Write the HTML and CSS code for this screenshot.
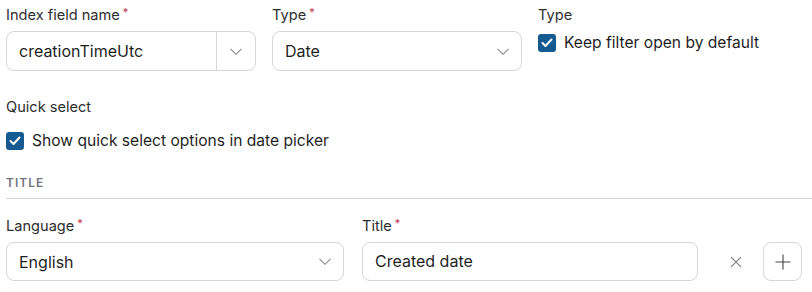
FILE: index.html
```html
<!DOCTYPE html>
<html lang="en">
<head>
    <meta charset="UTF-8">
    <meta name="viewport" content="width=device-width, initial-scale=1.0">
    <title>Date Filter</title>
    <link rel="stylesheet" href="styles.css">
</head>
<body>
    <div class="container">
        <div class="row-top">
            <div class="field">
                <label class="label">Index field name<span class="req">*</span></label>
                <div class="combo">
                    <div class="combo-value">creationTimeUtc</div>
                    <div class="combo-toggle">
                        <svg width="12" height="7" viewBox="0 0 12 7"><path d="M0.5 0.8l5.5 5.5 5.5-5.5" fill="none" stroke="#8a8a8a" stroke-width="1.1"/></svg>
                    </div>
                </div>
            </div>
            <div class="field">
                <label class="label">Type<span class="req">*</span></label>
                <div class="select">
                    <span>Date</span>
                    <svg width="12" height="7" viewBox="0 0 12 7"><path d="M0.5 0.8l5.5 5.5 5.5-5.5" fill="none" stroke="#8a8a8a" stroke-width="1.1"/></svg>
                </div>
            </div>
            <div class="field">
                <label class="label">Type</label>
                <div class="check check-top">
                    <span class="box"><svg width="12" height="10" viewBox="0 0 12 10"><path d="M1.5 5l3 3 6-6.5" fill="none" stroke="#fff" stroke-width="2" stroke-linecap="round" stroke-linejoin="round"/></svg></span>
                    Keep filter open by default
                </div>
            </div>
        </div>

        <div class="quick">
            <div class="label">Quick select</div>
            <div class="check check-quick">
                <span class="box"><svg width="12" height="10" viewBox="0 0 12 10"><path d="M1.5 5l3 3 6-6.5" fill="none" stroke="#fff" stroke-width="2" stroke-linecap="round" stroke-linejoin="round"/></svg></span>
                Show quick select options in date picker
            </div>
        </div>

        <div class="section-title">TITLE</div>

        <div class="row-bottom">
            <div class="field">
                <label class="label">Language<span class="req">*</span></label>
                <div class="select">
                    <span>English</span>
                    <svg width="12" height="7" viewBox="0 0 12 7"><path d="M0.5 0.8l5.5 5.5 5.5-5.5" fill="none" stroke="#8a8a8a" stroke-width="1.1"/></svg>
                </div>
            </div>
            <div class="field">
                <label class="label">Title<span class="req">*</span></label>
                <div class="input">Created date</div>
            </div>
            <button class="icon-btn clear">
                <svg width="12" height="12" viewBox="0 0 12 12"><path d="M1 1l10 10M11 1l-10 10" stroke="#8a8a8a" stroke-width="1.1"/></svg>
            </button>
            <button class="icon-btn add">
                <svg width="16" height="16" viewBox="0 0 16 16"><path d="M8 0.5v15M0.5 8h15" stroke="#444" stroke-width="1.1"/></svg>
            </button>
        </div>
    </div>
</body>
</html>
```

FILE: styles.css
```css
body {
    margin: 0;
    font-family: Inter, "Noto Sans", sans-serif;
    color: #1f1f1f;
    background-color: white;
}

.container {
    padding: 5px 0 0 6px;
}

.row-top {
    display: grid;
    grid-template-columns: 250px 250px 250px;
    column-gap: 16px;
}

.label {
    display: block;
    font-size: 14.6px;
    line-height: 20px;
    color: #2e2e2e;
    margin-bottom: 6px;
}

.req {
    color: #c2334a;
    font-size: 11px;
    vertical-align: top;
    margin-left: 3px;
    position: relative;
    top: -3px;
}

.combo, .select, .input {
    box-sizing: border-box;
    height: 40px;
    border: 1px solid #d6d6d6;
    border-radius: 8px;
    font-size: 16px;
    color: #1f1f1f;
}

.combo {
    display: flex;
}

.combo-value {
    flex: 1;
    padding-left: 12px;
    line-height: 38px;
}

.combo-toggle {
    width: 38px;
    border-left: 1px solid #d6d6d6;
    display: flex;
    align-items: center;
    justify-content: center;
}

.select {
    display: flex;
    align-items: center;
    justify-content: space-between;
    padding: 0 12px 0 12px;
}

.input {
    padding-left: 12px;
    line-height: 38px;
}

.check {
    display: flex;
    align-items: center;
    font-size: 15.6px;
    line-height: 20px;
    color: #1f1f1f;
}

.check-top {
    margin-top: 8px;
}

.box {
    width: 18px;
    height: 18px;
    border-radius: 3px;
    background-color: #155b92;
    display: flex;
    align-items: center;
    justify-content: center;
    margin-right: 8px;
}

.quick {
    margin-top: 26px;
}

.quick .label {
    margin-bottom: 14px;
}

.section-title {
    margin-top: 24px;
    font-size: 12px;
    font-weight: 600;
    letter-spacing: 1px;
    color: #6f7480;
    line-height: 16px;
    padding-bottom: 7px;
    border-bottom: 1px solid #d4d4d4;
}

.row-bottom {
    margin-top: 17px;
    display: grid;
    grid-template-columns: 338px 336px 39px 39px;
    column-gap: 18px;
    align-items: end;
}

.row-bottom .select, .row-bottom .input {
    height: 39px;
}

.row-bottom .input {
    line-height: 37px;
}

.icon-btn {
    box-sizing: border-box;
    height: 39px;
    width: 39px;
    padding: 0;
    display: flex;
    align-items: center;
    justify-content: center;
    background: white;
    cursor: pointer;
}

.clear {
    border: none;
}

.add {
    margin-left: -10px;
    border: 1px solid #d6d6d6;
    border-radius: 8px;
}
```
